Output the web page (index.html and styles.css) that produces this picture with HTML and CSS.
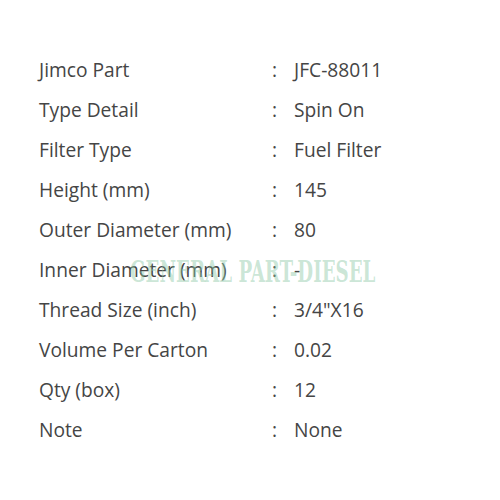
FILE: index.html
```html
<!DOCTYPE html>
<html>
<head>
<meta charset="utf-8">
<link rel="stylesheet" href="styles.css">
</head>
<body>
<div class="sheet">
  <div class="row"><span class="label">Jimco Part</span><span class="colon">:</span><span class="value">JFC-88011</span></div>
  <div class="row"><span class="label">Type Detail</span><span class="colon">:</span><span class="value">Spin On</span></div>
  <div class="row"><span class="label">Filter Type</span><span class="colon">:</span><span class="value">Fuel Filter</span></div>
  <div class="row"><span class="label">Height (mm)</span><span class="colon">:</span><span class="value">145</span></div>
  <div class="row"><span class="label">Outer Diameter (mm)</span><span class="colon">:</span><span class="value">80</span></div>
  <div class="row"><span class="label">Inner Diameter (mm)</span><span class="colon">:</span><span class="value">-</span></div>
  <div class="row"><span class="label">Thread Size (inch)</span><span class="colon">:</span><span class="value">3/4"X16</span></div>
  <div class="row"><span class="label">Volume Per Carton</span><span class="colon">:</span><span class="value">0.02</span></div>
  <div class="row"><span class="label">Qty (box)</span><span class="colon">:</span><span class="value">12</span></div>
  <div class="row"><span class="label">Note</span><span class="colon">:</span><span class="value">None</span></div>
  <div class="watermark">GENERAL PART-DIESEL</div>
</div>
</body>
</html>
```

FILE: styles.css
```css
html, body {
  margin: 0;
  padding: 0;
  background: #fff;
}
.sheet {
  position: relative;
  width: 500px;
  height: 500px;
  padding: 50px 0 0 39px;
  box-sizing: border-box;
  font-family: "Open Sans", sans-serif;
  font-size: 19.2px;
  color: #454545;
}
.row {
  display: flex;
  height: 40px;
  line-height: 40px;
}
.label {
  width: 233px;
}
.colon {
  width: 22px;
}
.watermark {
  position: absolute;
  left: 130px;
  top: 255px;
  font-family: "DejaVu Serif Condensed", "DejaVu Serif", serif;
  font-weight: bold;
  font-size: 30px;
  line-height: 34px;
  color: rgba(140, 200, 165, 0.45);
  transform: scaleX(0.675);
  transform-origin: left center;
  white-space: nowrap;
}
```
